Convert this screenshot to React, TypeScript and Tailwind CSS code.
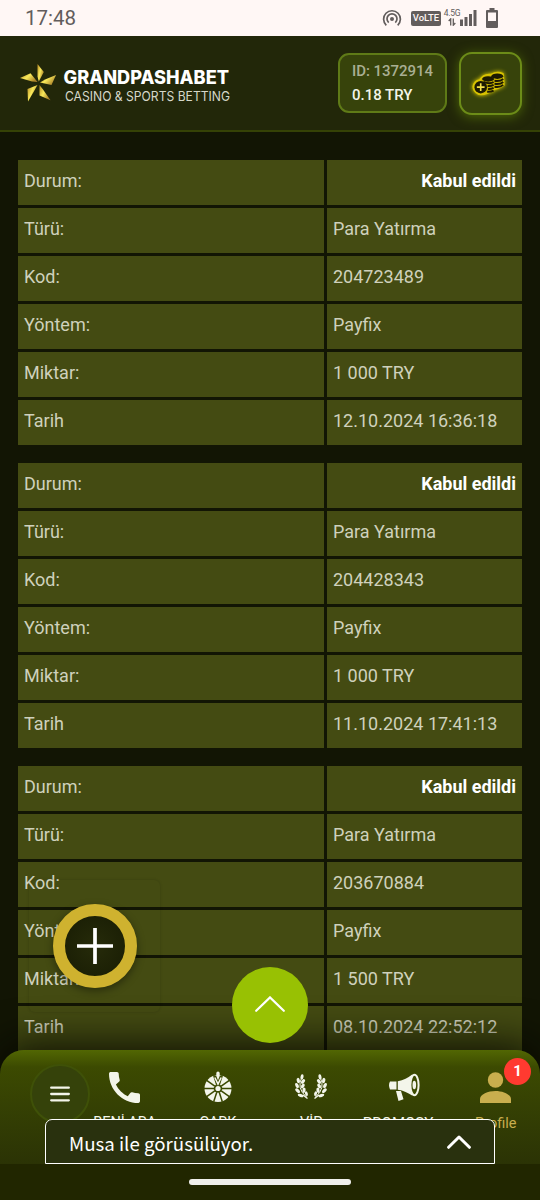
import type { ReactNode } from "react";

type Transaction = {
  code: string;
  amount: string;
  date: string;
};

const TRANSACTIONS: Transaction[] = [
  { code: "204723489", amount: "1 000 TRY", date: "12.10.2024 16:36:18" },
  { code: "204428343", amount: "1 000 TRY", date: "11.10.2024 17:41:13" },
  { code: "203670884", amount: "1 500 TRY", date: "08.10.2024 22:52:12" },
];

const SPOKES = [0, 36, 72, 108, 144, 180, 216, 252, 288, 324];

function StatusBar() {
  return (
    <div className="flex h-9 shrink-0 items-center justify-between bg-[#fff7f5] pr-[42px] pl-[25px] text-[#625d5c]">
      <span className="pt-px text-[20.5px] leading-none">17:48</span>
      <div className="flex items-center">
        <svg width="20" height="18" viewBox="0 0 20 18" fill="none" stroke="currentColor" strokeWidth="1.7">
          <path d="M4.3 16.3A8.4 8.4 0 1 1 15.7 16.3" />
          <path d="M6.7 13.6A5 5 0 1 1 13.3 13.6" />
          <circle cx="10" cy="10" r="2" fill="currentColor" stroke="none" />
        </svg>
        <span className="ml-[9px] flex h-[15px] w-[30px] items-center justify-center rounded-[2px] bg-[#625d5c] text-[9.500px] font-medium text-[#fff7f5]">
          VoLTE
        </span>
        <div className="ml-[3px] flex h-[18px] w-4 flex-col items-center">
          <span className="text-[8.500px] leading-[9px] tracking-[-0.3px]">4.5G</span>
          <svg width="8" height="8" viewBox="0 0 8 8" fill="none" stroke="currentColor" strokeWidth="1.3">
            <path d="M2.7 7.5V.8L.7 3M5.3.5v6.7l2-2.2" />
          </svg>
        </div>
        <svg width="17" height="16" viewBox="0 0 17 16" fill="currentColor">
          <path d="M0 9.5h3V16H0zM4.5 7h3v9h-3zM9 4h3v12H9zM13.5 0h3v16h-3z" />
        </svg>
        <svg className="ml-[9px]" width="12" height="20" viewBox="0 0 12 20">
          <path d="M3.5 0h5v2H11a1 1 0 0 1 1 1v16a1 1 0 0 1-1 1H1a1 1 0 0 1-1-1V3a1 1 0 0 1 1-1h2.500z" fill="currentColor" />
          <path d="M2 4.500h8V13H2z" fill="#fff7f5" />
        </svg>
      </div>
    </div>
  );
}

function Logo() {
  return (
    <svg className="-mt-0.5" width="214" height="46" viewBox="0 0 214 46">
      <defs>
        <linearGradient id="gold" x1="0" y1="0" x2="1" y2="0.6">
          <stop offset="0" stopColor="#b58a22" />
          <stop offset="0.5" stopColor="#f9e95a" />
          <stop offset="1" stopColor="#a87f28" />
        </linearGradient>
      </defs>
      <g fill="url(#gold)" transform="translate(0 1.5)">
        <path d="M17.500 3.500L23.800 11.500L18.800 21L17.500 16z" />
        <path d="M36 14.500L31.500 24.500L20 22L25 19z" />
        <path d="M30.500 39.800L19.500 35L19.500 24.500L23 29z" />
        <path d="M8 41L7.500 28.500L17.500 24.500L15 29z" />
        <path d="M0 17.500L10.500 12.800L17.500 21.500L12 21z" />
      </g>
      <text
        x="43.500"
        y="24.500"
        textLength="165.500"
        lengthAdjust="spacingAndGlyphs"
        fill="#fff"
        className="font-['Inter',sans-serif] text-[18.500px] font-extrabold"
      >
        GRANDPASHABET
      </text>
      <text
        x="45"
        y="42"
        textLength="165"
        lengthAdjust="spacingAndGlyphs"
        fill="#d6d8c9"
        className="font-['Inter',sans-serif] text-[13.500px] font-normal"
      >
        CASINO &amp; SPORTS BETTING
      </text>
    </svg>
  );
}

function CoinsIcon() {
  return (
    <svg
      className="-ml-1 overflow-visible drop-shadow-[0_0_2px_#f0dc00]"
      width="34"
      height="23"
      viewBox="0 0 36 25"
      fill="none"
    >
      <path
        d="M8 9Q12 2 20 3Q27-1 33 2L34 14Q28 18 22 19Q15 25 7 24Q1 21 1 16Q2 10 8 9z"
        fill="#c9b400"
        stroke="#d8c300"
        strokeWidth="2"
        strokeLinejoin="round"
      />
      <g fill="#1c1a02">
        <ellipse cx="27" cy="4.500" rx="6.500" ry="3" />
        <ellipse cx="17" cy="7.500" rx="6.500" ry="3" />
        <circle cx="9" cy="16.500" r="6.800" />
      </g>
      <path
        d="M24 9.500Q30 10.500 33.500 7.500M24 12.800Q30 13.800 33.500 10.800M24 16Q30 17 33.500 14M12 10.800Q19 13.500 23 10.800M16.500 15.200Q20 15.500 23 14M17 18.400Q20 18.700 23 17.200M16 21.500Q20 21.800 23 20.300"
        stroke="#1c1a02"
        strokeWidth="2.100"
      />
      <path d="M9 12.300v8.400M4.800 16.500h8.400" stroke="#f3e24a" strokeWidth="1.800" />
    </svg>
  );
}

function Header() {
  return (
    <header className="flex h-24 shrink-0 items-center justify-between border-b-2 border-[#354206] bg-[#222709] pr-[18px] pl-5">
      <Logo />
      <div className="flex items-center gap-3">
        <div className="flex h-[60px] w-[109px] flex-col justify-center rounded-[11px] border-2 border-[#5f7a17] bg-[#37430b] pl-3 text-[15px] leading-6 font-medium whitespace-nowrap">
          <span className="tracking-[-0.05px] text-[#a9af93]">ID: 1372914</span>
          <span className="text-[#f3f5e9]">0.18 TRY</span>
        </div>
        <button
          type="button"
          className="flex size-[63px] items-center justify-center rounded-[13px] border-2 border-[#6c8c18] bg-[#37430b] shadow-[0_2px_12px_#4d6508]"
        >
          <CoinsIcon />
        </button>
      </div>
    </header>
  );
}

function TransactionTable({ item }: { item: Transaction }) {
  const rows = [
    ["Durum:", "Kabul edildi"],
    ["Türü:", "Para Yatırma"],
    ["Kod:", item.code],
    ["Yöntem:", "Payfix"],
    ["Miktar:", item.amount],
    ["Tarih", item.date],
  ];

  return (
    <div className="flex flex-col gap-[3px] text-[18px] text-[#cfd1bc]">
      {rows.map(([label, value], i) => (
        <div key={label} className="grid h-[45px] grid-cols-[306px_195px] gap-[3px]">
          <div className="flex items-center bg-[#444b12] px-1.5 pb-1">{label}</div>
          <div
            className={
              i === 0
                ? "flex items-center justify-end bg-[#444b12] px-1.5 pb-1 font-bold text-white"
                : "flex items-center bg-[#444b12] px-1.5 pb-1"
            }
          >
            {value}
          </div>
        </div>
      ))}
    </div>
  );
}

function WheelIcon() {
  return (
    <svg width="28" height="32" viewBox="0 0 28 32">
      <circle cx="14" cy="17.500" r="13.500" fill="#f3f5ea" />
      <g stroke="#3b4a02" strokeWidth="1.500">
        {SPOKES.map((angle) => (
          <path key={angle} d="M14 13.500V3.500" transform={`rotate(${angle + 18} 14 17.500)`} />
        ))}
      </g>
      <circle cx="14" cy="17.500" r="4.300" fill="#3b4a02" />
      <circle cx="14" cy="17.500" r="2.600" fill="#f3f5ea" />
      <path d="M14 13.500L9.800 4.500h8.400z" fill="#3b4a02" />
      <path d="M10.800 6.500L14 13L17.200 6.500" fill="none" stroke="#f3f5ea" strokeWidth="1.600" />
      <path d="M14 9.500L12.300 5V2.300a1.700 1.700 0 0 1 3.400 0V5z" fill="#f3f5ea" />
    </svg>
  );
}

function LaurelBranch() {
  return (
    <g>
      <path d="M7 3Q1 14 11.500 23" fill="none" stroke="#f3f5ea" strokeWidth="1" />
      <ellipse cx="7" cy="2.900" rx="1.500" ry="2.700" transform="rotate(10 7 2.900)" />
      <ellipse cx="3.300" cy="6.500" rx="1.600" ry="2.700" transform="rotate(-15 3.300 6.500)" />
      <ellipse cx="8" cy="7.500" rx="1.600" ry="2.700" transform="rotate(40 8 7.500)" />
      <ellipse cx="2" cy="11.500" rx="1.600" ry="2.700" transform="rotate(-25 2 11.500)" />
      <ellipse cx="7.800" cy="12" rx="1.600" ry="2.700" transform="rotate(30 7.800 12)" />
      <ellipse cx="2.600" cy="16.700" rx="1.600" ry="2.900" transform="rotate(-45 2.600 16.700)" />
      <ellipse cx="9" cy="16.300" rx="1.600" ry="2.700" transform="rotate(10 9 16.300)" />
      <ellipse cx="5.600" cy="21.500" rx="1.600" ry="3" transform="rotate(-72 5.600 21.500)" />
      <ellipse cx="11.400" cy="19.600" rx="1.400" ry="2.500" transform="rotate(-15 11.400 19.600)" />
      <path d="M8 21l4.500 3.500" stroke="#f3f5ea" strokeWidth="1.400" />
    </g>
  );
}

function LaurelIcon() {
  return (
    <svg width="32" height="26" viewBox="0 0 32 26" fill="#f3f5ea">
      <LaurelBranch />
      <g transform="translate(32 0) scale(-1 1)">
        <LaurelBranch />
      </g>
    </svg>
  );
}

function NavItem({ label, children }: { label: string; children: ReactNode }) {
  return (
    <div className="flex w-[93.300px] shrink-0 flex-col items-center text-[#f3f5ea]">
      <div className="flex h-9 items-center justify-center">{children}</div>
      <span className="mt-2 text-[14.500px] leading-5 whitespace-nowrap">{label}</span>
    </div>
  );
}

function BottomNav() {
  return (
    <nav className="relative -mt-[30px] flex h-[114px] shrink-0 rounded-t-[24px] bg-linear-to-b from-[#526703] via-[#3c4a01] via-15% to-[#2b3305] pt-[19px] pl-[30px] shadow-[0_-6px_40px_rgba(5,6,0,0.85)]">
      <div className="-mt-[5px] flex size-[60px] shrink-0 items-center justify-center rounded-full border-2 border-[#3f5108] bg-[#35420a]">
        <svg width="20" height="16" viewBox="0 0 20 16" stroke="#f3f5ea" strokeWidth="2.300" strokeLinecap="round">
          <path d="M1.200 1.700h17.600M1.200 8h17.600M1.200 14.300h17.600" />
        </svg>
      </div>
      <div className="-ml-3 flex">
        <NavItem label="BENİ ARA">
          <svg width="31" height="31" viewBox="3 3 18 18" fill="currentColor">
            <path d="M20.010 15.380c-1.230 0-2.420-.2-3.530-.56a.977.977 0 0 0-1.010.24l-1.570 1.970c-2.830-1.350-5.480-3.900-6.890-6.830l1.950-1.660c.27-.28.35-.67.24-1.020-.37-1.110-.56-2.300-.56-3.530 0-.54-.45-.99-.99-.99H4.190C3.650 3 3 3.240 3 3.990 3 13.280 10.730 21 20.010 21c.71 0 .99-.63.99-1.180v-3.450c0-.54-.45-.99-.99-.99z" />
          </svg>
        </NavItem>
        <NavItem label="ÇARK">
          <WheelIcon />
        </NavItem>
        <NavItem label="VİP">
          <LaurelIcon />
        </NavItem>
        <div className="flex w-[93.300px] shrink-0 flex-col items-center text-[#f3f5ea]">
          <div className="flex h-9 items-center justify-center pr-0.5">
            <svg width="32" height="29" viewBox="0 0 32 29" fill="currentColor">
              <path d="M2 8.500Q0 12 2 16.500H8.500V8.500zM9.800 8.300Q18 6.500 24.500 1.200Q22 12 24.500 22.800Q18 18 9.800 16.700zM8 18h5l2.500 8.200L10.500 28z" />
              <ellipse cx="26.500" cy="12" rx="4.100" ry="10.200" fill="#3c4a01" stroke="currentColor" strokeWidth="2" />
              <ellipse cx="26.300" cy="12" rx="1.800" ry="4.200" />
            </svg>
          </div>
          <span className="mt-2 mr-[13px] text-[15px] leading-5">PROMOSY</span>
        </div>
        <div className="relative -ml-0.5 flex w-[93.300px] shrink-0 flex-col items-center text-[#c9ae4e]">
          <svg className="mt-[3px]" width="31" height="31" viewBox="0 0 31 31" fill="currentColor">
            <circle cx="15.500" cy="8" r="7.700" />
            <path d="M0 31v-4c0-4.500 8-8 15.500-8S31 22.500 31 27v4z" />
          </svg>
          <span className="mt-[11px] text-[14.500px] leading-5">Profile</span>
          <span className="absolute -top-[11px] right-[11.500px] flex size-[27px] items-center justify-center rounded-full bg-[#ff3a30] text-[15px] font-bold text-white">
            1
          </span>
        </div>
      </div>
    </nav>
  );
}

export default function App() {
  return (
    <div className="relative flex h-[1200px] w-[540px] flex-col overflow-hidden bg-[#121504] font-['Roboto',sans-serif]">
      <StatusBar />
      <Header />
      <main className="flex min-h-0 flex-1 flex-col gap-[18px] overflow-hidden px-[18px] pt-7">
        {TRANSACTIONS.map((item) => (
          <TransactionTable key={item.code} item={item} />
        ))}
      </main>
      <BottomNav />
      <div className="relative flex h-9 shrink-0 justify-center bg-[#212600] pt-[15px]">
        <div className="h-1.5 w-[162px] rounded-full bg-[#efefeb]" />
      </div>

      {/* Floating controls */}
      <div className="absolute top-[880px] left-[29px] flex h-[132px] w-[131px] items-center justify-center rounded-md shadow-[0_0_3px_rgba(0,0,0,0.18)]">
        <button
          type="button"
          className="flex size-[84px] items-center justify-center rounded-full border-[12px] border-[#cfb22f] bg-radial from-[#262b0a] to-[#181c04] shadow-[0_3px_9px_rgba(0,0,0,0.4)]"
        >
          <svg width="36" height="36" viewBox="0 0 36 36" stroke="#fff" strokeWidth="3.700">
            <path d="M18 0v36M0 18h36" />
          </svg>
        </button>
      </div>
      <button
        type="button"
        className="absolute top-[967px] left-[232px] flex size-[76px] items-center justify-center rounded-full bg-[#98c103]"
      >
        <svg className="-mt-0.5" width="30" height="16" viewBox="0 0 30 16" fill="none" stroke="#fff" strokeWidth="2.200" strokeLinecap="round">
          <path d="M1.200 14.800L15 1.400L28.800 14.800" />
        </svg>
      </button>

      {/* Live chat bar */}
      <div className="absolute top-[1119px] left-[45px] flex h-[45px] w-[450px] items-center justify-between rounded-t-[7px] border-[1.500px] border-white bg-[#29310e] px-[23px] font-['Noto_Sans_CJK_SC',sans-serif] text-[18.700px] text-white">
        <span className="pt-[3px] whitespace-nowrap">Musa ile görüsülüyor.</span>
        <svg className="mt-px" width="24" height="14" viewBox="0 0 24 14" fill="none" stroke="currentColor" strokeWidth="3" strokeLinecap="round" strokeLinejoin="round">
          <path d="M1.600 12.300L12 2L22.400 12.300" />
        </svg>
      </div>
    </div>
  );
}
